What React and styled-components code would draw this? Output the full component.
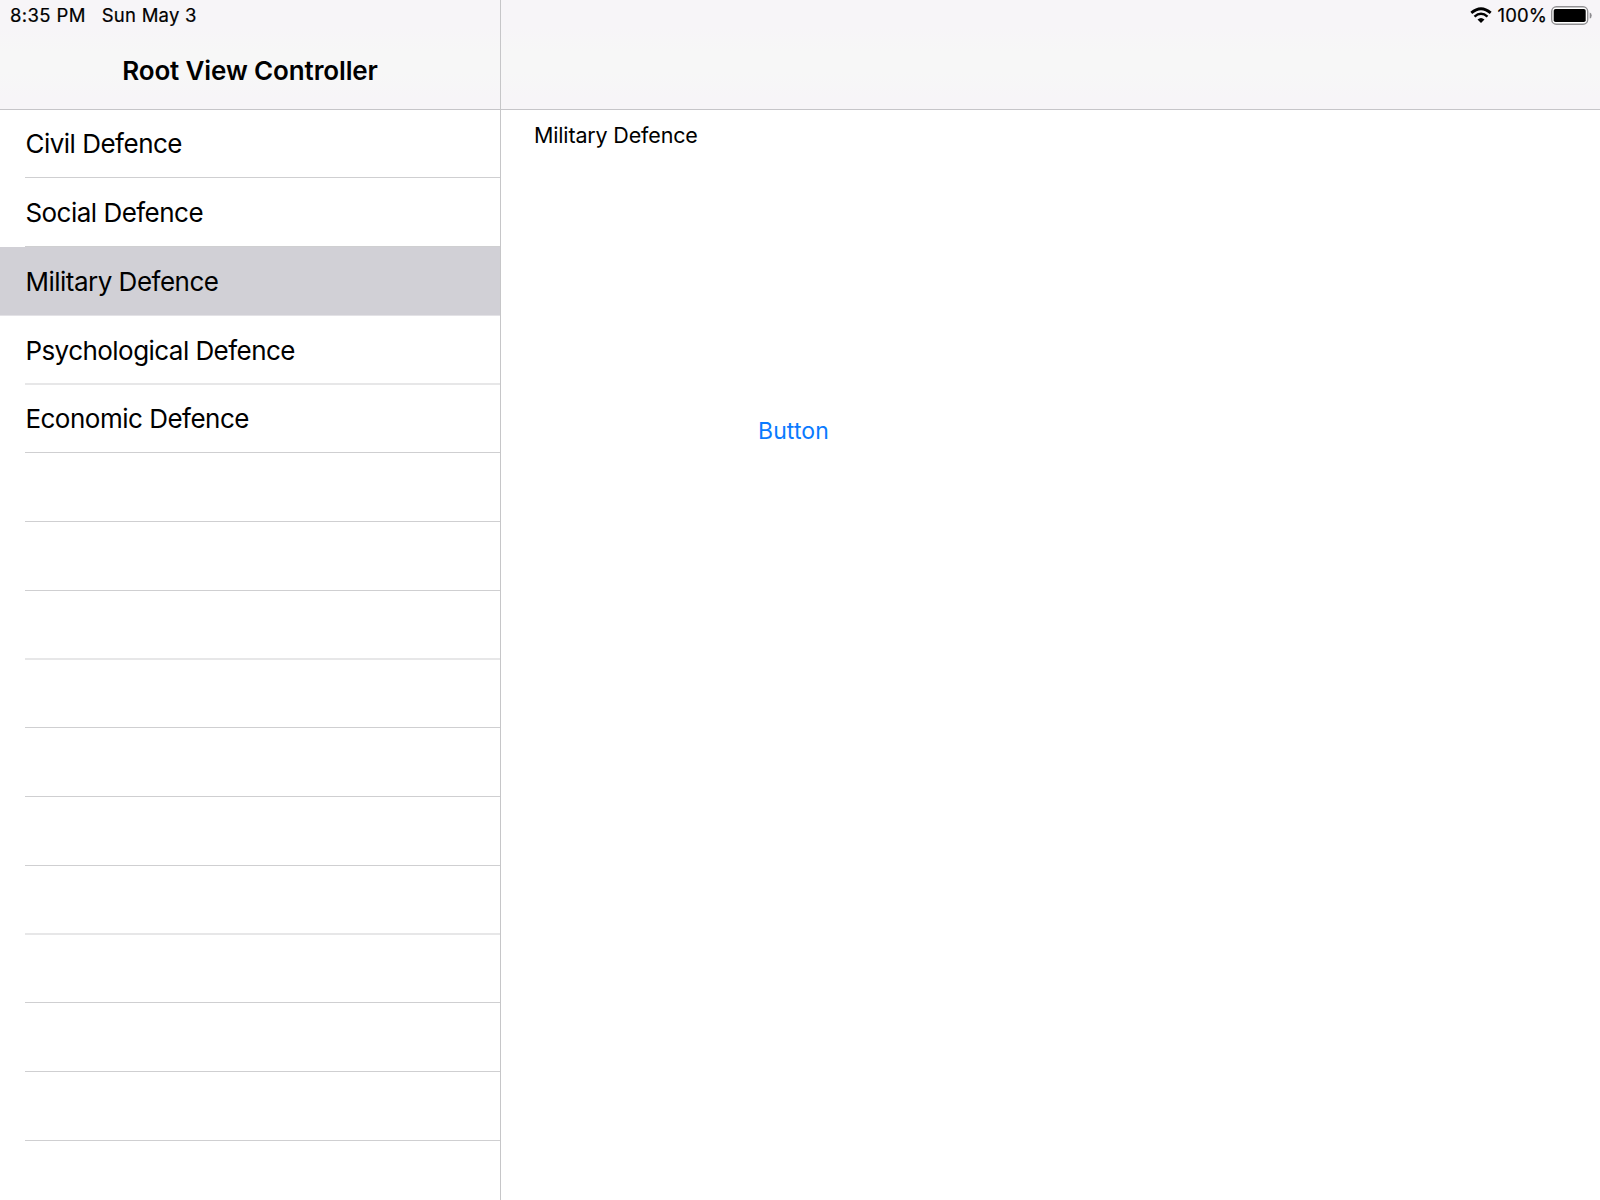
import React from "react";
import styled, { createGlobalStyle } from "styled-components";

const GlobalStyle = createGlobalStyle`
  * { box-sizing: border-box; }
  body {
    margin: 0;
    background: #fff;
    color: #000;
    font-family: Inter, "Liberation Sans", sans-serif;
  }
`;

const Screen = styled.div`
  display: grid;
  grid-template-columns: 501px 1fr;
  width: 1600px;
  height: 1200px;
  overflow: hidden;
`;

const Pane = styled.section`
  display: flex;
  flex-direction: column;
  min-width: 0;
  min-height: 0;
  ${(p) => p.$divided && "border-right: 1px solid #c6c6c8;"}
`;

const Header = styled.header`
  flex: none;
  display: flex;
  flex-direction: column;
  height: 110px;
  background: linear-gradient(#f7f5f8 0, #f7f5f8 28px, #f7f7f7 52px, #f7f7f7 72px, #f7f5f8 98px);
  border-bottom: 1px solid #c6c5c9;
`;

const StatusBar = styled.div`
  display: flex;
  align-items: center;
  justify-content: ${(p) => (p.$end ? "flex-end" : "flex-start")};
  height: 31px;
  padding: 0 8px 0 10px;
  gap: ${(p) => (p.$end ? "0" : "16px")};
  font-size: 18.5px;
  line-height: 22px;
  font-weight: 400;
  -webkit-text-stroke: 0.2px #000;
  white-space: nowrap;
`;

const StatusText = styled.span`
  padding-bottom: 1px;
  letter-spacing: ${(p) => p.$tracking}px;
`;

const Title = styled.h1`
  margin: 0;
  padding-top: 24px;
  text-align: center;
  font-size: 26px;
  line-height: 32px;
  font-weight: 600;
  letter-spacing: -0.12px;
`;

const Table = styled.ul`
  margin: 0;
  padding: 0;
  list-style: none;
  overflow: hidden;
`;

const CellLabel = styled.span`
  flex: 1;
  border-bottom: 1px solid #cfcfd1;
  padding-top: 18px;
  text-indent: 0.4px;
  font-size: 26px;
  line-height: 34px;
  letter-spacing: ${(p) => p.$tracking}px;
`;

/* Rows average 68.75px, so every fourth one is a pixel shorter. */
const Cell = styled.li`
  display: flex;
  height: 69px;
  padding-left: 25px;

  &:nth-child(4n + 1) {
    height: 68px;
  }
  &:nth-child(4n + 1) ${CellLabel} {
    padding-top: 17px;
  }
  &:nth-child(4n) ${CellLabel} {
    border-bottom: 2px solid #e7e7e8;
  }
  ${(p) =>
    p.$selected &&
    `
    background: #d1d0d6;
    border-bottom: 1px solid #e3e2e6;
    ${CellLabel} { border-bottom: 0; }
  `}
`;

const Detail = styled.main`
  display: flex;
  flex-direction: column;
  align-items: flex-start;
  padding: 11px 0 0 33px;
`;

const DetailLabel = styled.p`
  margin: 0;
  font-size: 21.5px;
  line-height: 28px;
  letter-spacing: -0.16px;
`;

const TextButton = styled.button`
  margin: 267px 0 0 224px;
  padding: 0;
  border: 0;
  background: none;
  color: #0a7aff;
  font: inherit;
  font-size: 23px;
  line-height: 30px;
  letter-spacing: 0.1px;
`;

const WifiSvg = styled.svg`
  margin-right: 6px;
`;
const BatterySvg = styled.svg`
  margin-left: 4px;
`;

const Wifi = () => (
  <WifiSvg width="22" height="17" viewBox="0 0 22 17">
    <path d="M1.3 5.9Q11 -2.5 20.7 5.9" fill="none" stroke="#000" strokeWidth="2.8" />
    <path d="M4.5 9.6Q11 4 17.5 9.6" fill="none" stroke="#000" strokeWidth="2.5" />
    <path d="M7.5 12.6Q11 9.6 14.5 12.6L11 16Z" />
  </WifiSvg>
);

const Battery = () => (
  <BatterySvg width="41" height="19" viewBox="0 0 41 19">
    <rect x="0.7" y="0.8" width="36" height="17.4" rx="4.6" fill="#fff" stroke="#929194" strokeWidth="1.4" />
    <rect x="2.7" y="3" width="32" height="13" rx="1.8" />
    <path d="M38.7 6.5Q40.7 7 40.7 9.5Q40.7 12 38.7 12.5Z" fill="#8d8c90" />
  </BatterySvg>
);

const cells = [
  { label: "Civil Defence", tracking: -0.5 },
  { label: "Social Defence", tracking: -0.52 },
  { label: "Military Defence", tracking: -0.5, selected: true },
  { label: "Psychological Defence", tracking: -0.55 },
  { label: "Economic Defence", tracking: -0.5 },
  ...Array.from({ length: 11 }, () => ({ label: "" })),
];

export default function App() {
  return (
    <>
      <GlobalStyle />
      <Screen>
        <Pane $divided>
          <Header>
            <StatusBar>
              <StatusText $tracking={0.36}>8:35 PM</StatusText>
              <StatusText $tracking={0.25}>Sun May 3</StatusText>
            </StatusBar>
            <Title>Root View Controller</Title>
          </Header>
          <Table>
            {cells.map((cell, i) => (
              <Cell key={i} $selected={cell.selected}>
                <CellLabel $tracking={cell.tracking || 0}>{cell.label}</CellLabel>
              </Cell>
            ))}
          </Table>
        </Pane>
        <Pane>
          <Header>
            <StatusBar $end>
              <Wifi />
              <StatusText $tracking={0.1}>100%</StatusText>
              <Battery />
            </StatusBar>
          </Header>
          <Detail>
            <DetailLabel>Military Defence</DetailLabel>
            <TextButton>Button</TextButton>
          </Detail>
        </Pane>
      </Screen>
    </>
  );
}
